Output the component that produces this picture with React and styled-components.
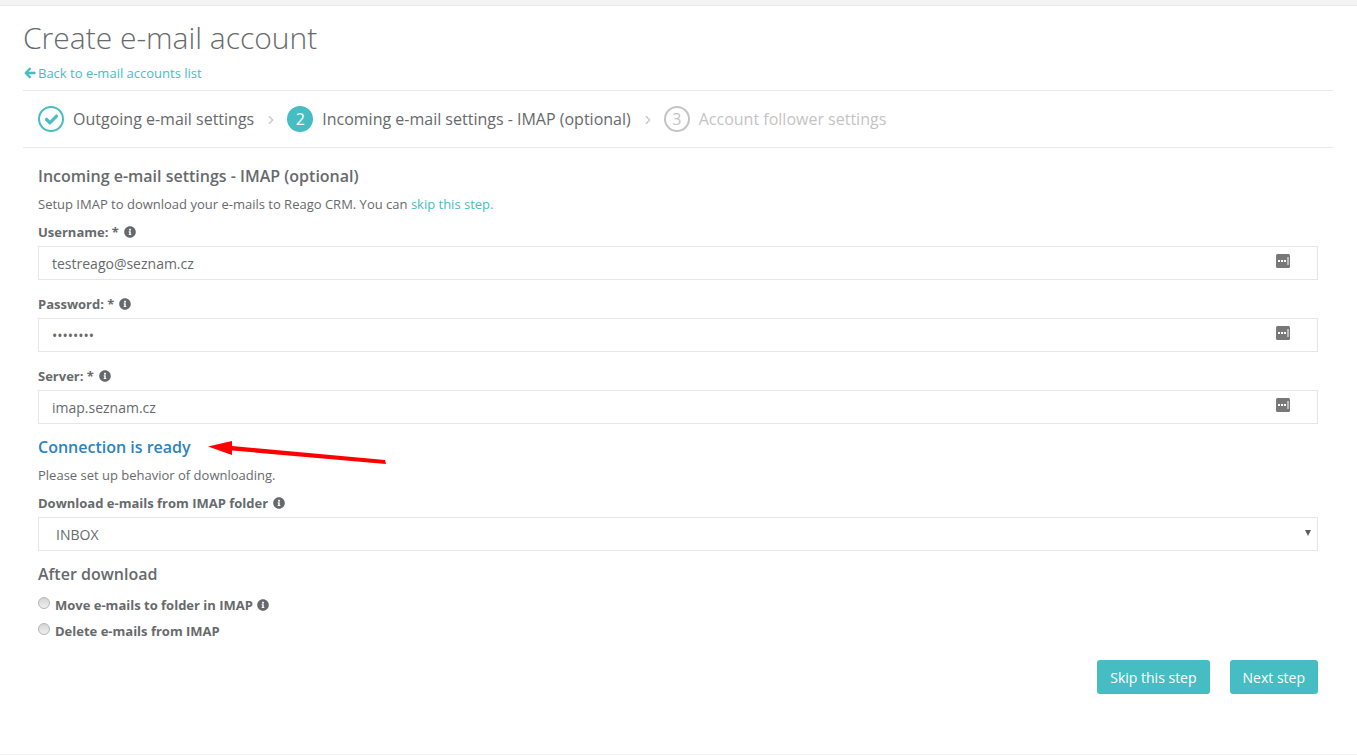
import React from 'react';
import styled, { createGlobalStyle } from 'styled-components';
import { FaArrowLeft, FaCheck, FaInfoCircle } from 'react-icons/fa';
import { FiChevronRight } from 'react-icons/fi';

const GlobalStyle = createGlobalStyle`
  html, body {
    margin: 0;
    padding: 0;
    background: #fff;
  }
  body {
    font-family: 'Open Sans', sans-serif;
    font-size: 13px;
    color: #676a6c;
  }
`;

const steps = [
  { id: 1, label: 'Outgoing e-mail settings', state: 'done' },
  { id: 2, label: 'Incoming e-mail settings - IMAP (optional)', state: 'active' },
  { id: 3, label: 'Account follower settings', state: 'todo' },
];

const KeyIcon = () => (
  <KeySvg viewBox="0 0 14 14" aria-hidden="true">
    <rect x="0" y="0" width="14" height="14" rx="1.5" fill="#787878" />
    <rect x="2" y="6" width="2" height="2" fill="#fff" />
    <rect x="5" y="6" width="2" height="2" fill="#fff" />
    <rect x="8" y="6" width="2" height="2" fill="#fff" />
    <rect x="11.5" y="3" width="1" height="8" fill="#fff" />
  </KeySvg>
);

const TextField = ({ label, value }) => (
  <div>
    <Label>
      {label}
      <InfoIcon />
    </Label>
    <InputWrap>
      <Input type="text" defaultValue={value} />
      <KeyIcon />
    </InputWrap>
  </div>
);

const App = () => {
  return (
    <Page>
      <GlobalStyle />
      <TopBar />
      <Content>
        <Title>Create e-mail account</Title>
        <BackLink href="#">
          <FaArrowLeft size={12} />
          Back to e-mail accounts list
        </BackLink>
        <Stepper>
          {steps.map((step, i) => (
            <React.Fragment key={step.id}>
              {i > 0 && (
                <StepArrow>
                  <FiChevronRight size={14} />
                </StepArrow>
              )}
              <Step>
                <StepBadge $state={step.state}>
                  {step.state === 'done' ? <FaCheck size={13} /> : step.id}
                </StepBadge>
                <StepLabel $state={step.state}>{step.label}</StepLabel>
              </Step>
            </React.Fragment>
          ))}
        </Stepper>
        <Form>
          <SectionTitle>Incoming e-mail settings - IMAP (optional)</SectionTitle>
          <Intro>
            Setup IMAP to download your e-mails to Reago CRM. You can{' '}
            <TextLink href="#">skip this step.</TextLink>
          </Intro>
          <Fields>
            <TextField label="Username: *" value="testreago@seznam.cz" />
            <TextField label="Password: *" value="••••••••" />
            <TextField label="Server: *" value="imap.seznam.cz" />
          </Fields>
          <ReadyRow>
            <ReadyTitle>Connection is ready</ReadyTitle>
            <Annotation viewBox="0 0 180 30" aria-hidden="true">
              <polygon points="0,6.5 24,1 24,6 177,20 178,24 24,10.5 24,15" fill="#f00" />
            </Annotation>
          </ReadyRow>
          <Hint>Please set up behavior of downloading.</Hint>
          <Label>
            Download e-mails from IMAP folder
            <InfoIcon />
          </Label>
          <SelectBox>
            <span>INBOX</span>
            <Caret />
          </SelectBox>
          <AfterTitle>After download</AfterTitle>
          <RadioList>
            <RadioRow>
              <Radio />
              Move e-mails to folder in IMAP
              <InfoIcon />
            </RadioRow>
            <RadioRow>
              <Radio />
              Delete e-mails from IMAP
            </RadioRow>
          </RadioList>
          <Actions>
            <PrimaryButton type="button">Skip this step</PrimaryButton>
            <PrimaryButton type="button">Next step</PrimaryButton>
          </Actions>
        </Form>
      </Content>
    </Page>
  );
};

const Page = styled.div`
  height: 755px;
  overflow: hidden;
  box-sizing: border-box;
  border-bottom: 1px solid #f0f0f0;
`;

const TopBar = styled.div`
  height: 5px;
  background: #f3f3f4;
  border-bottom: 1px solid #e7eaec;
`;

const Content = styled.div`
  padding: 0 24px 0 23px;
`;

const Title = styled.h1`
  margin: 0;
  padding-top: 11px;
  font-size: 30px;
  line-height: 41px;
  font-weight: 300;
  color: #676a6c;
`;

const BackLink = styled.a`
  display: flex;
  align-items: center;
  gap: 2px;
  height: 18px;
  margin-top: 6px;
  padding-left: 1px;
  font-size: 13px;
  color: #46bdc2;
  text-decoration: none;

  svg {
    stroke: currentColor;
    stroke-width: 30;
  }
`;

const Stepper = styled.div`
  display: flex;
  align-items: center;
  height: 56px;
  margin-top: 8px;
  padding-left: 15px;
  border-top: 1px solid #e7eaec;
  border-bottom: 1px solid #e7eaec;
`;

const Step = styled.div`
  display: flex;
  align-items: center;
  gap: 9px;
`;

const StepBadge = styled.span`
  display: flex;
  align-items: center;
  justify-content: center;
  box-sizing: border-box;
  width: 26px;
  height: 26px;
  border-radius: 50%;
  font-size: 16px;
  border: 2px solid ${(p) => (p.$state === 'todo' ? '#c4c4c4' : '#46bdc2')};
  background: ${(p) => (p.$state === 'active' ? '#46bdc2' : '#fff')};
  color: ${(p) =>
    p.$state === 'active' ? '#fff' : p.$state === 'done' ? '#46bdc2' : '#c4c4c4'};

  svg {
    stroke: currentColor;
    stroke-width: 30;
  }
`;

const StepLabel = styled.span`
  font-size: 16px;
  color: ${(p) => (p.$state === 'todo' ? '#c4c4c4' : '#676a6c')};
`;

const StepArrow = styled.span`
  display: flex;
  margin: 1px 9px 0 10px;
  color: #c4c4c4;
`;

const Form = styled.div`
  padding: 0 15px;
`;

const SectionTitle = styled.h3`
  margin: 0;
  padding-top: 17px;
  font-size: 16px;
  line-height: 22px;
  font-weight: 600;
  color: #676a6c;
`;

const Intro = styled.p`
  margin: 8px 0 10px;
  font-size: 13px;
  line-height: 18px;
`;

const TextLink = styled.a`
  color: #46bdc2;
  text-decoration: none;
`;

const Fields = styled.div`
  display: flex;
  flex-direction: column;
  gap: 15px;
`;

const Label = styled.label`
  display: flex;
  align-items: center;
  gap: 5px;
  height: 18px;
  margin-bottom: 5px;
  font-size: 13px;
  font-weight: 700;
  color: #676a6c;
`;

const InfoIcon = styled(FaInfoCircle)`
  width: 12px;
  height: 12px;
  color: #676a6c;
`;

const InputWrap = styled.div`
  display: flex;
  align-items: center;
  box-sizing: border-box;
  width: 1280px;
  height: 34px;
  padding: 0 13px;
  border: 1px solid #e5e6e7;
`;

const Input = styled.input`
  flex: 1;
  min-width: 0;
  padding: 0;
  border: 0;
  outline: 0;
  font-family: inherit;
  font-size: 14px;
  color: #676a6c;
  background: transparent;
`;

const KeySvg = styled.svg`
  width: 14px;
  height: 14px;
  margin: -4px 14px 0 0;
`;

const ReadyRow = styled.div`
  position: relative;
  height: 22px;
  margin-top: 12px;
`;

const ReadyTitle = styled.h3`
  margin: 0;
  font-size: 16px;
  line-height: 22px;
  font-weight: 600;
  color: #2c83c0;
`;

const Annotation = styled.svg`
  position: absolute;
  left: 170px;
  top: 4px;
  width: 180px;
  height: 30px;
`;

const Hint = styled.p`
  margin: 8px 0 10px;
  font-size: 13px;
  line-height: 18px;
`;

const SelectBox = styled.div`
  position: relative;
  display: flex;
  align-items: center;
  box-sizing: border-box;
  width: 1280px;
  height: 34px;
  padding: 0 17px;
  border: 1px solid #e5e6e7;
  font-size: 14px;
  color: #676a6c;
`;

const Caret = styled.i`
  position: absolute;
  right: 6px;
  top: 12px;
  border-left: 3px solid transparent;
  border-right: 3px solid transparent;
  border-top: 6px solid #5f5f5f;
`;

const AfterTitle = styled.h3`
  margin: 12px 0 0;
  font-size: 16px;
  line-height: 22px;
  font-weight: 600;
  color: #676a6c;
`;

const RadioList = styled.div`
  display: flex;
  flex-direction: column;
  gap: 8px;
  margin-top: 11px;
`;

const RadioRow = styled.label`
  display: flex;
  align-items: center;
  gap: 4px;
  height: 18px;
  font-size: 13px;
  font-weight: 700;
  color: #676a6c;
`;

const Radio = styled.span`
  box-sizing: border-box;
  width: 12px;
  height: 12px;
  margin: -5px 1px 0 0;
  border-radius: 50%;
  border: 1px solid #b4b4b4;
  background: linear-gradient(#d4d4d4, #f0f0f0);
`;

const Actions = styled.div`
  display: flex;
  justify-content: flex-end;
  gap: 20px;
  width: 1280px;
  margin-top: 20px;
`;

const PrimaryButton = styled.button`
  height: 34px;
  padding: 0 13px;
  border: 0;
  border-radius: 3px;
  background: #46bdc2;
  color: #fff;
  font-family: inherit;
  font-size: 14px;
`;

export default App;
